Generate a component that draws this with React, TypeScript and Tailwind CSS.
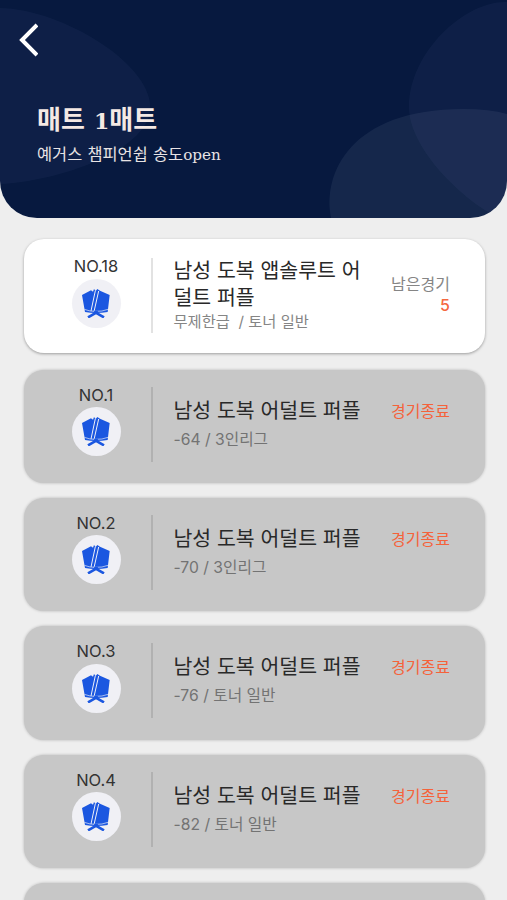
import React from 'react';

interface Match {
  no: number;
  title: string;
  detail: string;
  remaining?: number;
}

const matches: Match[] = [
  { no: 18, title: '남성 도복 앱솔루트 어덜트 퍼플', detail: '무제한급  / 토너 일반', remaining: 5 },
  { no: 1, title: '남성 도복 어덜트 퍼플', detail: '-64 / 3인리그' },
  { no: 2, title: '남성 도복 어덜트 퍼플', detail: '-70 / 3인리그' },
  { no: 3, title: '남성 도복 어덜트 퍼플', detail: '-76 / 토너 일반' },
  { no: 4, title: '남성 도복 어덜트 퍼플', detail: '-82 / 토너 일반' },
];

const GiIcon: React.FC = () => (
  <svg viewBox="0 0 84 87" className="w-7 h-[29px]">
    <path d="M0 18 L27 4 L33 8 L36 0 L41 6 L46 0 L54 5 L83 18 L77 69 Q41 75 9 69 Z" fill="#1b57e0" />
    <path d="M40 5 L27 66 M50 6 L36 68" fill="none" stroke="#eff0f8" strokeWidth="3" />
    <path d="M7 61 Q25 68 41 67 Q60 68 78 61" fill="none" stroke="#eff0f8" strokeWidth="2" />
    <path d="M48 68 L18 85 M36 68 L66 85" fill="none" stroke="#1b57e0" strokeWidth="8" />
  </svg>
);

const Header: React.FC = () => (
  <header className="relative h-[218px] shrink-0 overflow-hidden rounded-b-[37px] bg-[#07193f]">
    <svg viewBox="0 0 507 218" className="absolute inset-0 w-full h-full">
      <path d="M0 8 C62 9 155 65 150 111 C145 151 60 181 0 184 Z" fill="#b4b9ff" fillOpacity="0.045" />
      <path d="M507 2 C467 0 410 50 409 106 C408 143 452 190 488 212 L507 218 Z" fill="#b4b9ff" fillOpacity="0.045" />
      <path d="M331 218 C322 174 350 109 463 109 Q490 109 507 114 L507 218 Z" fill="#e6ebff" fillOpacity="0.065" />
    </svg>
    <div className="relative flex flex-col pl-[37px]">
      <button aria-label="뒤로" className="-ml-[19px] mt-[23px] h-[34px] w-5">
        <svg viewBox="0 0 20 34" className="h-full w-full" fill="none" stroke="#fff" strokeWidth="4">
          <path d="M19 2 L4 17 L19 32" />
        </svg>
      </button>
      <h1 className="mt-[45px] h-9 text-[26px] leading-9 font-bold text-[#f4e9e4] [font-family:'DejaVu_Serif','Noto_Sans_CJK_KR',serif]">
        매트 <span className="text-[22px]">1</span>매트
      </h1>
      <p className="mt-1 h-[26px] text-[16.4px] leading-[26px] text-[#e8e3e4] [font-family:'DejaVu_Serif','Noto_Sans_CJK_KR',serif]">
        예거스 챔피언쉽 송도<span className="text-[15.2px]">open</span>
      </p>
    </div>
  </header>
);

const MatchCard: React.FC<{ match: Match }> = ({ match }) => {
  const active = match.remaining !== undefined;

  return (
    <article
      className={`flex shrink-0 rounded-[20px] ${
        active
          ? 'mb-[1.6px] h-[114.5px] bg-white pt-[2.5px] shadow-[0_1px_3px_rgba(0,0,0,0.35)]'
          : 'h-[113.4px] bg-[#c7c7c7] shadow-[0_0_3px_rgba(0,0,0,0.25)]'
      }`}
    >
      <div className="flex w-[127px] flex-col items-center pl-[17px] pt-[15px]">
        <span className="text-[16.5px] leading-5 text-[#333]">NO.{match.no}</span>
        <div className={`flex h-[49px] w-[49px] items-center justify-center rounded-full bg-[#f0f0f5] ${active ? 'mt-[3px]' : 'mt-[2.5px]'}`}>
          <GiIcon />
        </div>
      </div>
      <div className={`mt-[17px] h-[75px] w-[1.5px] ${active ? 'bg-[#e2e2e2]' : 'bg-[#b1b1b1]'}`} />
      <div className={`ml-[21px] w-[195px] ${active ? 'pt-[16px]' : 'pt-[27px]'}`}>
        <h2 className="text-[20.5px] leading-[27px] break-all text-[#292929]">{match.title}</h2>
        <p className={`whitespace-pre leading-5 ${active ? 'mt-px text-[15.3px] text-[#858585]' : 'mt-[6px] text-[15.7px] text-[#737373]'}`}>
          {match.detail}
        </p>
      </div>
      <div className={`flex-1 pr-[35px] text-right text-[16px] leading-[21px] ${active ? 'pt-[33px]' : 'pt-[31px]'}`}>
        {active ? (
          <>
            <p className="text-[#858585]">남은경기</p>
            <p className="font-medium text-[#f5683f]">{match.remaining}</p>
          </>
        ) : (
          <p className="text-[#f5623a]">경기종료</p>
        )}
      </div>
    </article>
  );
};

export default function App() {
  return (
    <div className="flex h-[900px] w-full flex-col overflow-hidden bg-[#eeeeee] [font-family:Inter,'Noto_Sans_CJK_KR',sans-serif]">
      <Header />
      <main className="flex flex-col gap-[15px] pl-6 pr-[22px] pt-[20.5px]">
        {matches.map((match) => (
          <MatchCard key={match.no} match={match} />
        ))}
        {/* top edge of the next card in the list */}
        <div className="h-[113.4px] shrink-0 rounded-[20px] bg-[#c7c7c7] shadow-[0_0_3px_rgba(0,0,0,0.25)]" />
      </main>
    </div>
  );
}
